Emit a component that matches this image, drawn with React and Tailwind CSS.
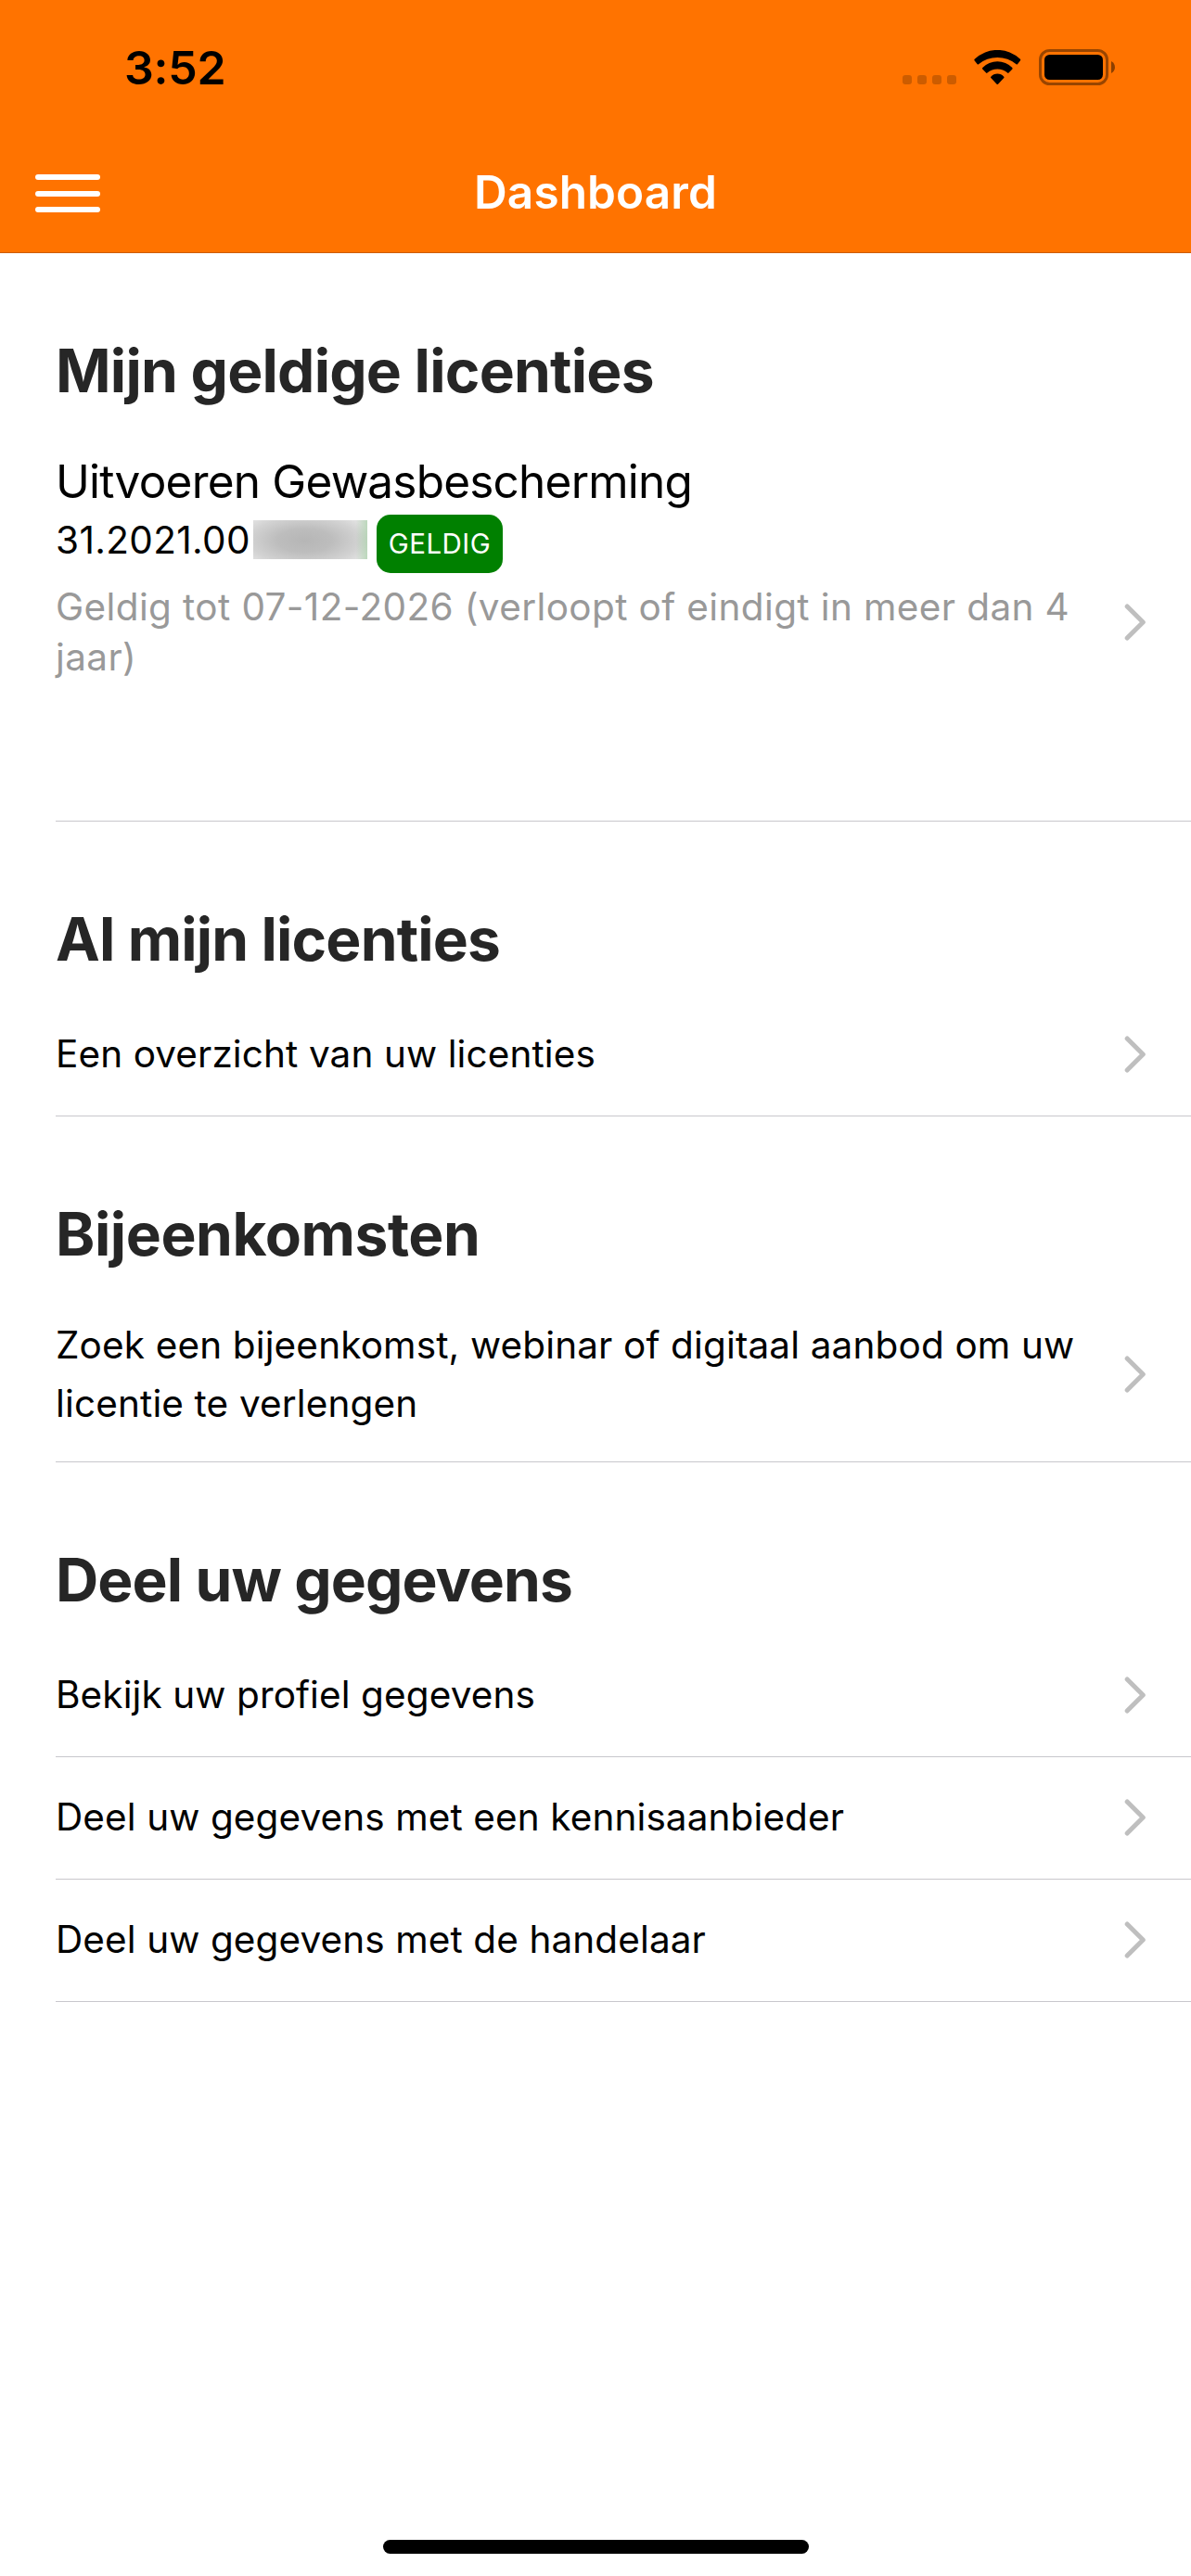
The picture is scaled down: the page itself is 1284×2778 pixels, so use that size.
import React from "react";

function SignalDots() {
  return (
    <div className="mt-[38px] flex gap-[6px]">
      {[0, 1, 2, 3].map((i) => (
        <span key={i} className="size-[10px] rounded-[3px] bg-black/20" />
      ))}
    </div>
  );
}

function WifiIcon() {
  return (
    <svg className="mt-[11px] ml-[19px] h-[38px] w-[51px]" viewBox="0 0 51 38" fill="#000">
      <path d="M0.7 9.8 A35.5 35.5 0 0 1 49.9 9.8 Q50.6 10.5 50 11.2 L46.9 15.2 Q46.3 15.9 45.6 15.2 A32.5 32.5 0 0 0 5 15.2 Q4.3 15.9 3.7 15.2 L0.5 11.2 Q0 10.5 0.7 9.8 Z" />
      <path d="M9.3 19 A22.5 22.5 0 0 1 41.3 19 Q41.9 19.7 41.4 20.4 L37.5 24.6 Q36.8 25.2 36.2 24.6 A16.7 16.7 0 0 0 14.4 24.6 Q13.8 25.2 13.1 24.6 L9.2 20.4 Q8.7 19.7 9.3 19 Z" />
      <path d="M18.3 28.7 A9.4 9.4 0 0 1 32.3 28.7 Q32.9 29.4 32.3 30 L26 36.7 Q25.3 37.4 24.6 36.7 L18.3 30 Q17.7 29.4 18.3 28.7 Z" />
    </svg>
  );
}

function BatteryIcon() {
  return (
    <svg className="mt-[10px] ml-[19px] h-[39px] w-[82px]" viewBox="0 0 82 39">
      <rect x="1.5" y="1.5" width="72" height="36" rx="10" fill="none" stroke="#000" strokeOpacity="0.4" strokeWidth="3" />
      <rect x="6" y="6" width="63" height="27" rx="5.5" fill="#000" />
      <path d="M78 13 C83.300 15.500 83.300 23.500 78 26 Z" fill="#000" fillOpacity="0.45" />
    </svg>
  );
}

function Chevron() {
  return (
    <svg className="mr-[48px] h-[42px] w-[24px] shrink-0" viewBox="0 0 24 42" fill="none" stroke="#bfbfbf" strokeWidth="5" strokeLinecap="round" strokeLinejoin="round">
      <path d="M3.200 2.900 L20.300 20 L3.200 37.100" />
    </svg>
  );
}

function Row({ children }) {
  return (
    <li className="flex items-center justify-between border-b border-[#c8c7cc]">
      {children}
      <Chevron />
    </li>
  );
}

function Section({ title, titleClass, children }) {
  return (
    <section className="pl-[60px]">
      <h2 className={"pt-[88px] pb-5 text-[64px] leading-[78px] font-bold text-[#262626] " + titleClass}>{title}</h2>
      <ul>{children}</ul>
    </section>
  );
}

function LinkText({ children }) {
  return <p className="pt-[33px] pb-[35px] text-[40.5px] leading-[63px] tracking-[0.1px]">{children}</p>;
}

export default function App() {
  return (
    <div className="flex h-[2778px] w-[1284px] flex-col overflow-hidden bg-white font-['Inter',sans-serif] text-black">
      <header className="h-[273px] border-b border-[#cc5c00] bg-[#ff7300]">
        <div className="flex h-[141px] items-start justify-between pr-[82px] pl-[134px]">
          <span className="mt-[43px] text-[50px] leading-[60px] font-semibold tracking-[-0.23px]">3:52</span>
          <div className="mt-[43px] flex items-start">
            <SignalDots />
            <WifiIcon />
            <BatteryIcon />
          </div>
        </div>
        <div className="grid h-[131px] grid-cols-[1fr_auto_1fr] items-center">
          <button className="mt-1 ml-[38px] flex w-[70px] flex-col gap-[11.5px]" aria-label="Menu">
            <span className="h-[6px] rounded-full bg-white" />
            <span className="h-[6px] rounded-full bg-white" />
            <span className="h-[6px] rounded-full bg-white" />
          </button>
          <h1 className="text-[49.5px] leading-[60px] font-semibold tracking-[0.1px] text-white">Dashboard</h1>
        </div>
      </header>

      <main className="flex-1">
        <Section title="Mijn geldige licenties" titleClass="tracking-[-0.77px]">
          <Row>
            <div className="w-[1116px] pt-[30px] pb-[149px]">
              <h3 className="text-[49.5px] leading-[60px] tracking-[-0.79px]">Uitvoeren Gewasbescherming</h3>
              <div className="flex h-[79px] items-start">
                <span className="mt-[2px] w-[213px] text-[40.5px] leading-[63px] tracking-[0.36px]">31.2021.00</span>
                <span className="mt-[12px] h-[42px] w-[123px] bg-[linear-gradient(90deg,transparent_90%,rgba(120,200,120,0.35)_100%),radial-gradient(ellipse_60%_75%_at_45%_52%,#b6b6b6_0%,#bdbdbd_40%,#d2d2d2_80%,#e0e0e0_100%)]" />
                <span className="mt-[6px] ml-[10px] flex h-[63px] w-[136px] justify-center rounded-[15px] bg-[#008000] text-[29.5px] leading-[63px] tracking-[0.47px] text-white">
                  GELDIG
                </span>
              </div>
              <p className="text-[40.5px] leading-[54px] tracking-[0.376px] text-[#999999]">
                Geldig tot 07-12-2026 (verloopt of eindigt in meer dan 4 jaar)
              </p>
            </div>
          </Row>
        </Section>

        <Section title="Al mijn licenties" titleClass="tracking-[-0.85px]">
          <Row>
            <LinkText>Een overzicht van uw licenties</LinkText>
          </Row>
        </Section>

        <Section title="Bijeenkomsten" titleClass="tracking-[-0.44px]">
          <Row>
            <p className="w-[1116px] pt-[29px] pb-[31px] text-[40.5px] leading-[63px] tracking-[0.14px]">
              Zoek een bijeenkomst, webinar of digitaal aanbod om uw licentie te verlengen
            </p>
          </Row>
        </Section>

        <Section title="Deel uw gegevens" titleClass="tracking-[-0.9px]">
          <Row>
            <LinkText>Bekijk uw profiel gegevens</LinkText>
          </Row>
          <Row>
            <LinkText>Deel uw gegevens met een kennisaanbieder</LinkText>
          </Row>
          <Row>
            <LinkText>Deel uw gegevens met de handelaar</LinkText>
          </Row>
        </Section>
      </main>

      <div className="mb-6 ml-[413px] h-[15px] w-[459px] rounded-full bg-black" />
    </div>
  );
}
